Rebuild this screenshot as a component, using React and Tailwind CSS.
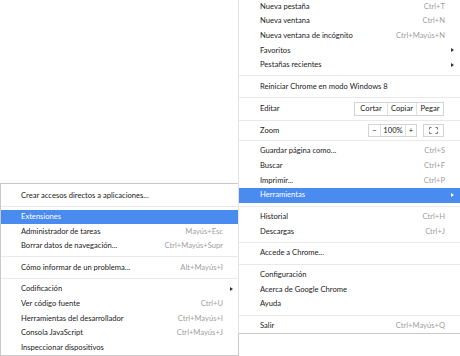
import React from "react";

const Arrow = ({ white }) => (
  <div
    className={
      "w-0 h-0 border-y-[2.5px] border-y-transparent border-l-[3px] " +
      (white ? "border-l-white" : "border-l-[#333]")
    }
  />
);

const Sep = () => (
  <div className="h-[7px] flex items-center">
    <div className="h-px w-full bg-[#e9e9e9]" />
  </div>
);

const MainRow = ({ label, sc, arrow, active }) => (
  <div
    className={
      "h-[14.67px] flex items-center pl-[21px] pr-[6px] " +
      (active ? "bg-[#4a8bf0] text-white" : "text-[#222]")
    }
  >
    <span className="flex-1 whitespace-nowrap">{label}</span>
    {sc && (
      <span className={active ? "text-white" : "text-[#a0a0a0]"}>{sc}</span>
    )}
    <div className="w-[9px] flex justify-end">{arrow && <Arrow white={active} />}</div>
  </div>
);

const SubRow = ({ label, sc, arrow, active }) => (
  <div
    className={
      "h-[14.6px] flex items-center pl-[20px] pr-[5px] " +
      (active ? "bg-[#4a8bf0] text-white" : "text-[#222]")
    }
  >
    <span className="flex-1 whitespace-nowrap">{label}</span>
    {sc && (
      <span className={active ? "text-white" : "text-[#a0a0a0]"}>{sc}</span>
    )}
    <div className="w-[10px] flex justify-end">{arrow && <Arrow white={active} />}</div>
  </div>
);

export default function App() {
  return (
    <div
      className="w-[460px] h-[356px] overflow-hidden bg-white flex items-start text-[7.6px] leading-none"
      style={{ fontFamily: 'Lato, "Open Sans", sans-serif' }}
    >
      {/* Submenu Herramientas */}
      <div className="w-[239px] mr-[-1px] mt-[183px] shrink-0 border border-[#c9c9c9] pt-[4px] bg-white">
        <SubRow label="Crear accesos directos a aplicaciones..." />
        <Sep />
        <SubRow label="Extensiones" active />
        <SubRow label="Administrador de tareas" sc="Mayús+Esc" />
        <SubRow label="Borrar datos de navegación..." sc="Ctrl+Mayús+Supr" />
        <Sep />
        <SubRow label="Cómo informar de un problema..." sc="Alt+Mayús+I" />
        <Sep />
        <SubRow label="Codificación" arrow />
        <SubRow label="Ver código fuente" sc="Ctrl+U" />
        <SubRow label="Herramientas del desarrollador" sc="Ctrl+Mayús+I" />
        <SubRow label="Consola JavaScript" sc="Ctrl+Mayús+J" />
        <SubRow label="Inspeccionar dispositivos" />
      </div>

      {/* Main Chrome menu */}
      <div className="flex-1 mt-[-1px] border-l border-b border-l-[#e4e4e4] border-b-[#c9c9c9] bg-white relative">
        <MainRow label="Nueva pestaña" sc="Ctrl+T" />
        <MainRow label="Nueva ventana" sc="Ctrl+N" />
        <MainRow label="Nueva ventana de incógnito" sc="Ctrl+Mayús+N" />
        <MainRow label="Favoritos" arrow />
        <MainRow label="Pestañas recientes" arrow />
        <Sep />
        <MainRow label="Reiniciar Chrome en modo Windows 8" />
        <Sep />
        <div className="h-[16px] flex items-center pl-[21px] pr-[16px] text-[#222]">
          <span className="flex-1">Editar</span>
          <div className="flex h-[14px] border border-[#d4d4d4]">
            <div className="w-[33px] flex items-center justify-center border-r border-[#e2e2e2]">Cortar</div>
            <div className="w-[29px] flex items-center justify-center border-r border-[#e2e2e2]">Copiar</div>
            <div className="w-[26px] flex items-center justify-center">Pegar</div>
          </div>
        </div>
        <Sep />
        <div className="h-[14px] flex items-center pl-[21px] pr-[16px] text-[#222]">
          <span className="flex-1">Zoom</span>
          <div className="flex h-[13px] border border-[#d4d4d4]">
            <div className="w-[12px] flex items-center justify-center border-r border-[#e2e2e2]">−</div>
            <div className="w-[25px] flex items-center justify-center border-r border-[#e2e2e2]">100%</div>
            <div className="w-[10px] flex items-center justify-center">+</div>
          </div>
          <div className="ml-[6px] w-[21px] h-[13px] border border-[#d4d4d4] flex items-center justify-center">
            <svg width="9" height="7" viewBox="0 0 9 7" fill="none" stroke="#777" strokeWidth="1">
              <path d="M0.5 2.5V0.5H2.5M6.5 0.5H8.5V2.5M0.5 4.5V6.5H2.5M6.5 6.5H8.5V4.5" />
            </svg>
          </div>
        </div>
        <div className="h-[6px] flex items-center">
          <div className="h-px w-full bg-[#e9e9e9]" />
        </div>
        <MainRow label="Guardar página como..." sc="Ctrl+S" />
        <MainRow label="Buscar" sc="Ctrl+F" />
        <MainRow label="Imprimir..." sc="Ctrl+P" />
        <MainRow label="Herramientas" arrow active />
        <Sep />
        <MainRow label="Historial" sc="Ctrl+H" />
        <MainRow label="Descargas" sc="Ctrl+J" />
        <Sep />
        <MainRow label="Accede a Chrome..." />
        <Sep />
        <MainRow label="Configuración" />
        <MainRow label="Acerca de Google Chrome" />
        <MainRow label="Ayuda" />
        <Sep />
        <MainRow label="Salir" sc="Ctrl+Mayús+Q" />
      </div>
    </div>
  );
}
